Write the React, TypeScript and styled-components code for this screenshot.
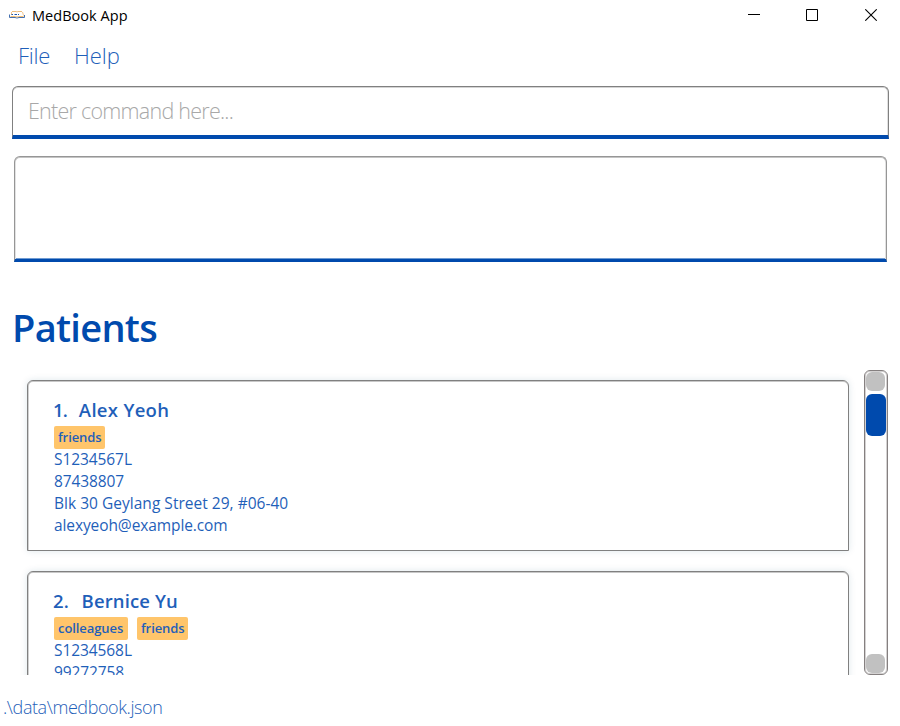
import React from "react";
import styled, { createGlobalStyle } from "styled-components";

const GlobalStyle = createGlobalStyle`
  * { box-sizing: border-box; }
  body { margin: 0; background: #fff; }
`;

const Window = styled.div`
  width: 900px;
  height: 726px;
  display: flex;
  flex-direction: column;
  overflow: hidden;
  background: #fff;
  color: #1f5fb9;
  font-family: "Open Sans", "Noto Sans", sans-serif;
  white-space: pre;
`;

const TitleBar = styled.header`
  height: 30px;
  flex: none;
  display: flex;
  align-items: center;
  padding-left: 9px;
  color: #000;
`;

const AppTitle = styled.span`
  margin-left: 7px;
  flex: 1;
  font-size: 14.5px;
  line-height: 20px;
  letter-spacing: 0.04px;
  padding-top: 1px;
`;

const WindowButton = styled.button`
  width: 58px;
  height: 30px;
  padding: 0;
  border: 0;
  background: none;
  display: grid;
  place-items: center;
  svg { display: block; }
  &:last-child { width: 59px; }
`;

const MenuBar = styled.nav`
  height: 56px;
  flex: none;
  display: flex;
  gap: 24px;
  padding: 9px 0 0 18px;
`;

const MenuItem = styled.span<{ $spacing: number }>`
  font-size: 22px;
  line-height: 32px;
  font-weight: 300;
  letter-spacing: ${(p) => p.$spacing}px;
`;

const CommandBox = styled.div`
  height: 53px;
  flex: none;
  margin: 0 11px 0 12px;
  padding: 8px 0 0 15px;
  border: 1px solid #808080;
  border-bottom: 4px solid #004aad;
  border-radius: 6px 6px 0 0;
  box-shadow: inset 0 1px 0 #d4d4d4, inset -1px 0 0 #e0e0e0;
`;

const Placeholder = styled.span`
  display: block;
  color: #a8a8a8;
  font-size: 21.5px;
  line-height: 31px;
  font-weight: 300;
  letter-spacing: -0.75px;
`;

const ResultBox = styled.div`
  height: 106px;
  flex: none;
  margin: 17px 13px 0 14px;
  border: 1px solid #969696;
  border-bottom: 3px solid #004aad;
  border-radius: 6px 6px 0 0;
  box-shadow: inset 0 1px 0 #c4c4c4, inset 1px 0 0 #e2e2e2, inset -1px 0 0 #e2e2e2, inset 0 -1px 0 #709bd2;
`;

const Heading = styled.h1`
  height: 108px;
  flex: none;
  margin: 0;
  padding: 38px 0 0 12px;
  color: #004aad;
  font-size: 38px;
  line-height: 54px;
  font-weight: 600;
  letter-spacing: -0.7px;
`;

const ListArea = styled.main`
  height: 305px;
  flex: none;
  display: flex;
  overflow: hidden;
`;

const Cards = styled.div`
  width: 864px;
  display: flex;
  flex-direction: column;
  gap: 20px;
  padding: 10px 15px 0 27px;
`;

const Card = styled.article`
  height: 171px;
  flex: none;
  padding: 17px 0 0 26px;
  border: 1px solid #808080;
  border-radius: 6px 6px 0 0;
  box-shadow: 0 0 7px rgba(0, 74, 110, 0.13), inset 0 1px 0 #c8c8c8, inset 1px 0 0 #d0d0d0;
`;

const Name = styled.h2<{ $spacing: number; $gap: number }>`
  margin: 0;
  height: 28px;
  display: flex;
  gap: ${(p) => p.$gap}px;
  font-size: 18.5px;
  line-height: 24px;
  font-weight: 600;
  letter-spacing: ${(p) => p.$spacing}px;
`;

const Index = styled.span<{ $spacing: number }>`
  margin-left: -1px;
  letter-spacing: ${(p) => p.$spacing}px;
`;

const Tags = styled.div`
  display: flex;
  gap: 9px;
  height: 22px;
`;

const Tag = styled.span<{ $width: number }>`
  width: ${(p) => p.$width}px;
  height: 23px;
  padding-left: 4px;
  border-radius: 2px;
  background: #ffc56b;
  font-size: 13px;
  line-height: 22px;
  font-weight: 600;
  letter-spacing: -0.08px;
`;

const Detail = styled.p<{ $spacing: number }>`
  margin: 0;
  height: 22px;
  font-size: 15.5px;
  line-height: 22px;
  letter-spacing: ${(p) => p.$spacing}px;
`;

const ScrollTrack = styled.div`
  width: 24px;
  height: 305px;
  display: flex;
  flex-direction: column;
  align-items: flex-start;
  padding: 1px;
  border: 1px solid #858080;
  border-radius: 6px;
  box-shadow: inset 0 0 0 1px #d4d2d2;
`;

const ScrollEnd = styled.div`
  width: 19px;
  height: 19px;
  flex: none;
  border-radius: 6px;
  background: #c1c1c1;
`;

const ScrollThumb = styled.div`
  width: 19.5px;
  height: 42px;
  margin: 3px 0 auto;
  border-radius: 6px;
  background: #004aad;
`;

const Footer = styled.footer`
  padding: 18px 0 0 3px;
  font-size: 18px;
  line-height: 28px;
  font-weight: 300;
  letter-spacing: -0.42px;
`;

const patients = [
  {
    name: "Alex Yeoh",
    spacing: 0.3,
    gap: 12,
    indexSpacing: -0.9,
    tags: [{ label: "friends", width: 51 }],
    details: [
      { text: "S1234567L", spacing: -0.08 },
      { text: "87438807", spacing: -0.12 },
      { text: "Blk 30 Geylang Street 29, #06-40", spacing: 0.02 },
      { text: "alexyeoh@example.com", spacing: -0.1 },
    ],
  },
  {
    name: "Bernice Yu",
    spacing: 0.12,
    gap: 12.5,
    indexSpacing: 0.2,
    tags: [
      { label: "colleagues", width: 74 },
      { label: "friends", width: 51 },
    ],
    details: [
      { text: "S1234568L", spacing: -0.08 },
      { text: "99272758", spacing: -0.12 },
    ],
  },
];

function BookIcon() {
  return (
    <svg width="16" height="16" viewBox="0 0 16 16" fill="none">
      <path d="M3 4.5H7L8 5L9 4.5H13" stroke="#efbc7a" />
      <path d="M2.5 5V8M13.5 5L14.5 8.5" stroke="#f3c58a" />
      <path d="M.5 7.5V10.5H6L8 11L10 10.5H15.5V8" stroke="#4470b0" />
      <path d="M1.5 9.5H6.5L8 10L9.5 9.5H14.5" stroke="#f4bd70" />
      <path d="M2.5 7.5H4M5.5 7.5H8M9 7.5H10" stroke="#1d55a8" />
    </svg>
  );
}

export default function App() {
  return (
    <Window>
      <GlobalStyle />
      <TitleBar>
        <BookIcon />
        <AppTitle>MedBook App</AppTitle>
        <WindowButton aria-label="Minimize">
          <svg width="12" height="12"><path d="M0 5.5H12" stroke="#000" /></svg>
        </WindowButton>
        <WindowButton aria-label="Maximize">
          <svg width="12" height="12"><path d="M.5 .5H11.5V11.5H.5Z" fill="none" stroke="#000" /></svg>
        </WindowButton>
        <WindowButton aria-label="Close">
          <svg width="12" height="12"><path d="M.3 .3L11.7 11.7M11.7 .3L.3 11.7" stroke="#000" strokeWidth="1.1" /></svg>
        </WindowButton>
      </TitleBar>
      <MenuBar>
        <MenuItem $spacing={-0.25}>File</MenuItem>
        <MenuItem $spacing={-0.1}>Help</MenuItem>
      </MenuBar>
      <CommandBox>
        <Placeholder>Enter command here...</Placeholder>
      </CommandBox>
      <ResultBox />
      <Heading>Patients</Heading>
      <ListArea>
        <Cards>
          {patients.map((patient, i) => (
            <Card key={patient.name}>
              <Name $spacing={patient.spacing} $gap={patient.gap}>
                <Index $spacing={patient.indexSpacing}>{i + 1}.</Index>
                <span>{patient.name}</span>
              </Name>
              <Tags>
                {patient.tags.map((tag) => (
                  <Tag key={tag.label} $width={tag.width}>{tag.label}</Tag>
                ))}
              </Tags>
              {patient.details.map((d) => (
                <Detail key={d.text} $spacing={d.spacing}>{d.text}</Detail>
              ))}
            </Card>
          ))}
        </Cards>
        <ScrollTrack>
          <ScrollEnd />
          <ScrollThumb />
          <ScrollEnd />
        </ScrollTrack>
      </ListArea>
      <Footer>.\data\medbook.json</Footer>
    </Window>
  );
}
